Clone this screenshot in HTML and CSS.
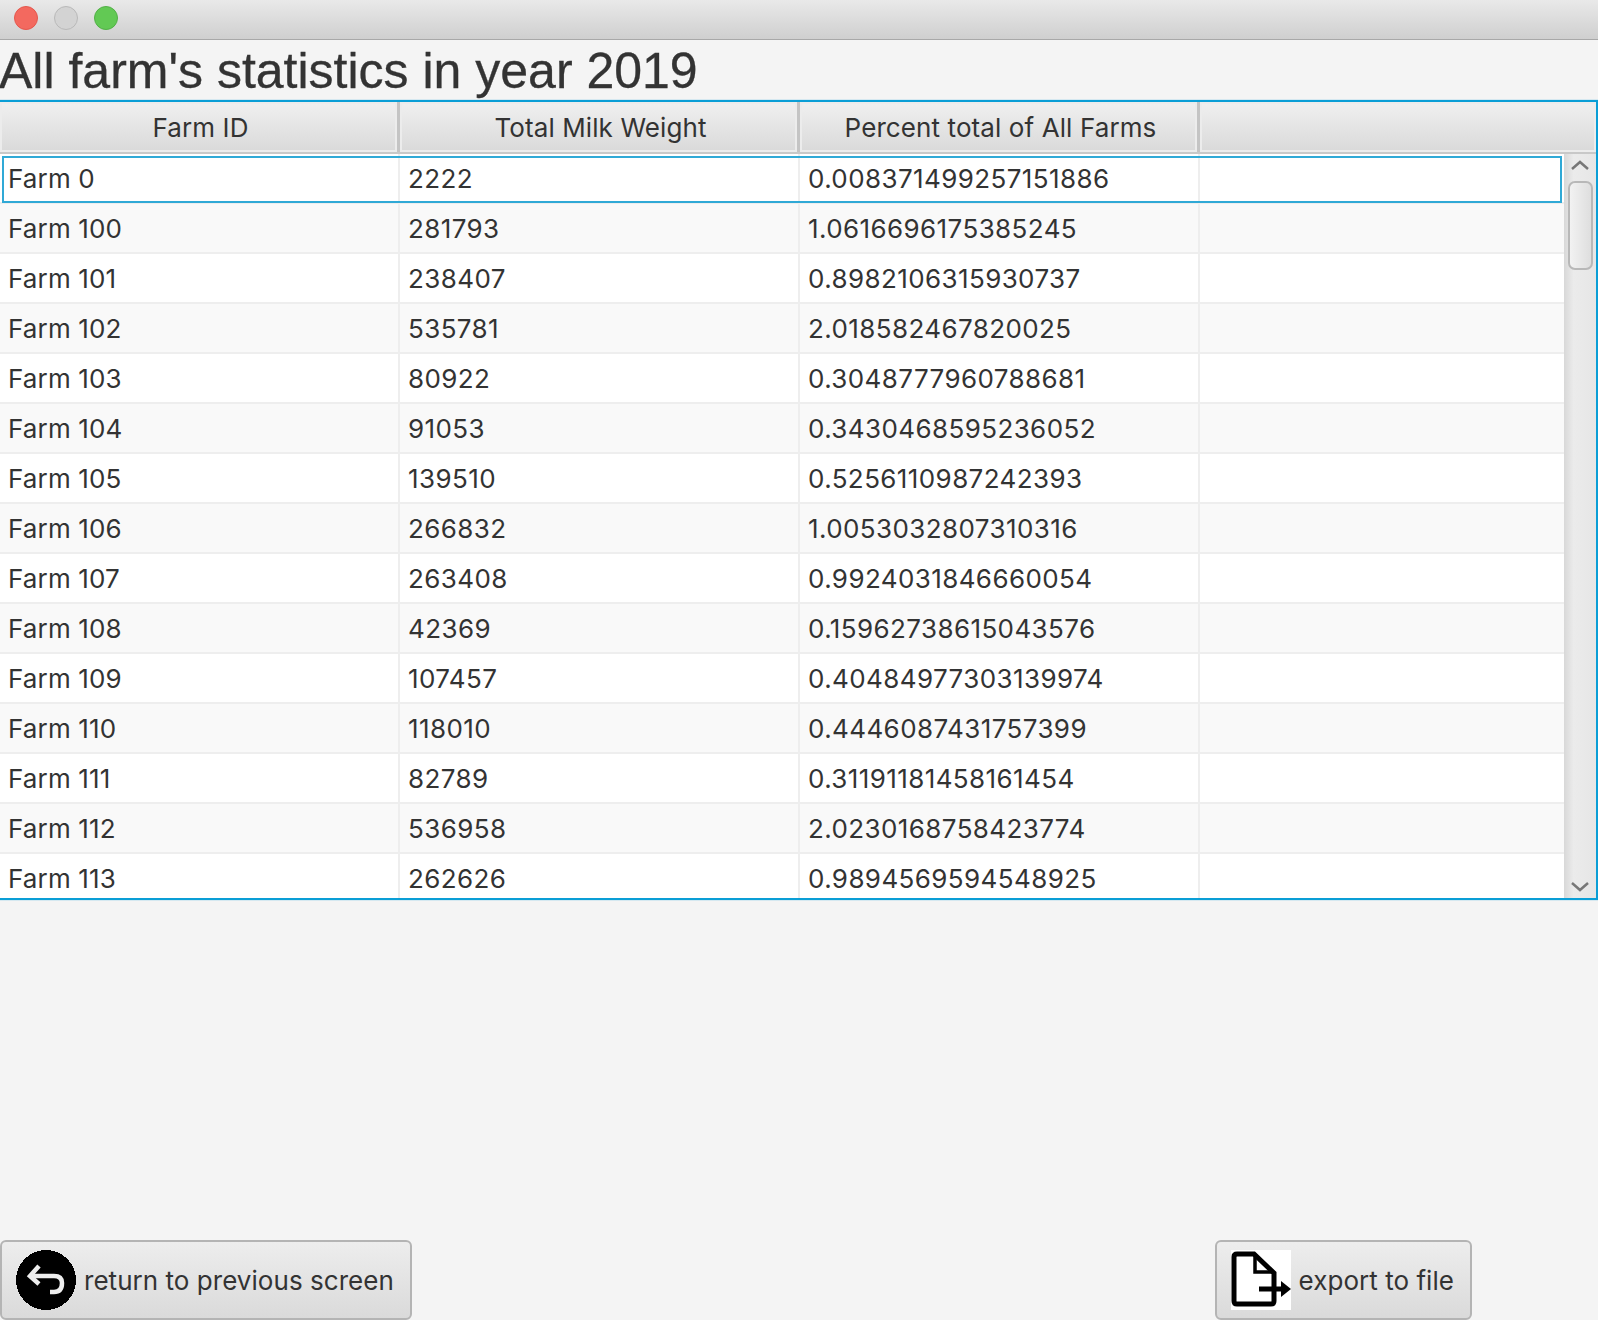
FILE: index.html
```html
<!DOCTYPE html>
<html lang="en">
<head>
  <meta charset="UTF-8">
  <title>All farm's statistics</title>
  <link rel="stylesheet" href="styles.css">
</head>
<body>
  <div class="titlebar">
    <span class="light red"></span>
    <span class="light grey"></span>
    <span class="light green"></span>
  </div>

  <h1 class="heading">All farm's statistics in year 2019</h1>

  <div class="tableview">
    <div class="header">
      <div class="col-head">Farm ID</div>
      <div class="col-head">Total Milk Weight</div>
      <div class="col-head">Percent total of All Farms</div>
      <div class="col-head"></div>
    </div>
    <div class="content">
      <div class="rows">
        <div class="row focused"><div class="cell">Farm 0</div><div class="cell">2222</div><div class="cell">0.008371499257151886</div><div class="cell"></div></div>
        <div class="row"><div class="cell">Farm 100</div><div class="cell">281793</div><div class="cell">1.0616696175385245</div><div class="cell"></div></div>
        <div class="row"><div class="cell">Farm 101</div><div class="cell">238407</div><div class="cell">0.8982106315930737</div><div class="cell"></div></div>
        <div class="row"><div class="cell">Farm 102</div><div class="cell">535781</div><div class="cell">2.018582467820025</div><div class="cell"></div></div>
        <div class="row"><div class="cell">Farm 103</div><div class="cell">80922</div><div class="cell">0.3048777960788681</div><div class="cell"></div></div>
        <div class="row"><div class="cell">Farm 104</div><div class="cell">91053</div><div class="cell">0.3430468595236052</div><div class="cell"></div></div>
        <div class="row"><div class="cell">Farm 105</div><div class="cell">139510</div><div class="cell">0.5256110987242393</div><div class="cell"></div></div>
        <div class="row"><div class="cell">Farm 106</div><div class="cell">266832</div><div class="cell">1.0053032807310316</div><div class="cell"></div></div>
        <div class="row"><div class="cell">Farm 107</div><div class="cell">263408</div><div class="cell">0.9924031846660054</div><div class="cell"></div></div>
        <div class="row"><div class="cell">Farm 108</div><div class="cell">42369</div><div class="cell">0.15962738615043576</div><div class="cell"></div></div>
        <div class="row"><div class="cell">Farm 109</div><div class="cell">107457</div><div class="cell">0.40484977303139974</div><div class="cell"></div></div>
        <div class="row"><div class="cell">Farm 110</div><div class="cell">118010</div><div class="cell">0.4446087431757399</div><div class="cell"></div></div>
        <div class="row"><div class="cell">Farm 111</div><div class="cell">82789</div><div class="cell">0.31191181458161454</div><div class="cell"></div></div>
        <div class="row"><div class="cell">Farm 112</div><div class="cell">536958</div><div class="cell">2.0230168758423774</div><div class="cell"></div></div>
        <div class="row"><div class="cell">Farm 113</div><div class="cell">262626</div><div class="cell">0.9894569594548925</div><div class="cell"></div></div>
      </div>
      <div class="scrollbar">
        <svg class="arrow" width="18" height="10" viewBox="0 0 18 10"><path d="M1 9 L9 2 L17 9" fill="none" stroke="#777" stroke-width="2.5"/></svg>
        <div class="thumb"></div>
        <svg class="arrow arrow-down" width="18" height="10" viewBox="0 0 18 10"><path d="M1 1 L9 8 L17 1" fill="none" stroke="#777" stroke-width="2.5"/></svg>
      </div>
    </div>
  </div>

  <div class="footer">
    <button class="btn">
      <svg width="60" height="60" viewBox="0 0 60 60">
        <circle cx="30" cy="30" r="30" fill="#000" shape-rendering="crispEdges"/>
        <path d="M14 26 H38 Q46 26 46 33 Q46 42 38 42 H34" fill="none" stroke="#eee" stroke-width="4.5"/>
        <path d="M23 16 L14 26 L23 34" fill="none" stroke="#eee" stroke-width="4.5"/>
      </svg>
      <span>return to previous screen</span>
    </button>
    <button class="btn">
      <svg class="icon-white" width="60" height="60" viewBox="0 0 60 60">
        <path d="M3 7 Q3 4 6 4 H23 L43 23 V51 Q43 54 40 54 H6 Q3 54 3 51 Z" fill="none" stroke="#000" stroke-width="5"/>
        <path d="M24 4 V22 H43" fill="none" stroke="#000" stroke-width="3.5"/>
        <path d="M28 39 H52" fill="none" stroke="#000" stroke-width="5"/>
        <path d="M50 31 L60 39 L50 47 Z" fill="#000"/>
      </svg>
      <span>export to file</span>
    </button>
  </div>
</body>
</html>
```

FILE: styles.css
```css
html, body {
  margin: 0;
  padding: 0;
  height: 100%;
  overflow: hidden;
}

body {
  display: flex;
  flex-direction: column;
  background-color: #f4f4f4;
  color: #333;
  font-family: Inter, "Noto Sans", sans-serif;
  font-size: 26px;
}

.titlebar {
  flex: none;
  display: flex;
  align-items: center;
  gap: 16px;
  box-sizing: border-box;
  height: 40px;
  padding: 0 0 4px 14px;
  background: linear-gradient(#e9e9e9, #cfcfcf);
  border-bottom: 1px solid #a8a8a8;
}

.light {
  box-sizing: border-box;
  width: 24px;
  height: 24px;
  border-radius: 50%;
  border: 1px solid transparent;
}

.red { background: #f3695f; border-color: #e5574d; }
.grey { background: #d3d3d3; border-color: #b9b9b9; }
.green { background: #62c954; border-color: #52b047; }

.heading {
  flex: none;
  margin: 0;
  height: 60px;
  font-family: "Liberation Sans", Arial, sans-serif;
  font-size: 50px;
  font-weight: normal;
  line-height: 62px;
  text-indent: -1px;
  white-space: nowrap;
  -webkit-text-stroke: 0.3px #333;
}

.tableview {
  flex: none;
  display: flex;
  flex-direction: column;
  box-sizing: border-box;
  height: 800px;
  border-top: 2px solid #0a9ed6;
  border-bottom: 2px solid #0a9ed6;
  border-right: 2px solid #0a9ed6;
  box-shadow: 0 0 0 1px #d5e8f0;
}

.header {
  flex: none;
  display: grid;
  grid-template-columns: 400px 400px 400px 1fr;
  box-sizing: border-box;
  height: 52px;
  border-bottom: 2px solid #c8c8c8;
}

.col-head {
  display: flex;
  align-items: center;
  justify-content: center;
  box-sizing: border-box;
  padding-left: 4px;
  border-right: 3px solid #c4c4c4;
  background: linear-gradient(#f0f0f0, #d9d9d9);
  box-shadow: inset 0 0 0 2px #ececec;
  letter-spacing: 0.1px;
}

.col-head:last-child {
  border-right: none;
}

.content {
  flex: 1;
  display: flex;
  min-height: 0;
}

.rows {
  flex: 1;
  min-width: 0;
  overflow: hidden;
}

.row {
  position: relative;
  display: grid;
  grid-template-columns: 400px 400px 400px 1fr;
  box-sizing: border-box;
  height: 50px;
  background: #fff;
  border-bottom: 2px solid #eee;
}

.row:nth-child(even) {
  background: #f9f9f9;
}

.focused::after {
  content: "";
  position: absolute;
  top: 2px;
  left: 2px;
  right: 2px;
  bottom: -1px;
  border: 2px solid #30a9d6;
}

.cell {
  display: flex;
  align-items: center;
  box-sizing: border-box;
  padding-left: 8px;
  border-right: 2px solid #eee;
  letter-spacing: 0.15px;
  white-space: nowrap;
}

/* the number columns run a little wider than the font does */
.cell:nth-child(n+2) {
  letter-spacing: 0.4px;
}

.cell:last-child {
  border-right: none;
}

.scrollbar {
  flex: none;
  display: flex;
  flex-direction: column;
  align-items: center;
  width: 32px;
  background: linear-gradient(90deg, #d8d8d8, #ebebeb 30%, #e6e6e6);
}

.arrow {
  flex: none;
  margin-top: 6px;
}

.arrow-down {
  margin-top: auto;
  margin-bottom: 6px;
}

.thumb {
  flex: none;
  box-sizing: border-box;
  width: 25px;
  height: 89px;
  margin-top: 11px;
  border: 2px solid #b8b8b8;
  border-radius: 7px;
  background: linear-gradient(90deg, #f2f2f2, #dedede);
}

.footer {
  flex: 1;
  display: flex;
  align-items: flex-end;
  justify-content: space-between;
  padding-right: 126px;
}

.btn {
  display: flex;
  align-items: center;
  gap: 8px;
  box-sizing: border-box;
  height: 80px;
  margin: 0;
  padding: 0 16px 0 14px;
  border: 2px solid #b4b4b4;
  border-radius: 6px;
  background: linear-gradient(#ededed, #dadada);
  color: #333;
  font: inherit;
  letter-spacing: 0.04px;
}

.icon-white {
  background: #fff;
}
```
